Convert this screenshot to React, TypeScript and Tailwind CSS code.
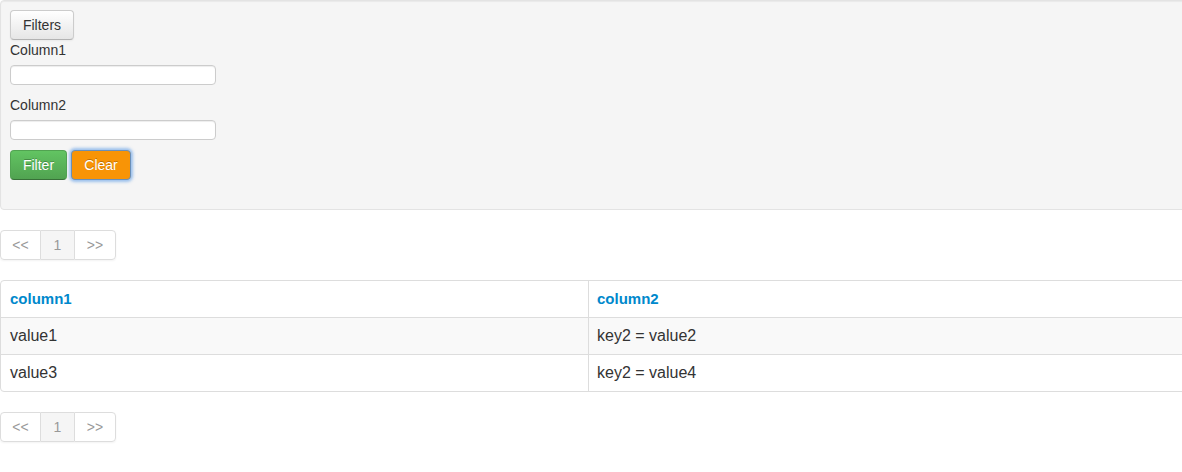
import React from "react";

const font = { fontFamily: '"Liberation Sans", Arial, sans-serif' };

function Pager() {
  return (
    <div className="flex">
      <div className="flex rounded-[4px] shadow-[0_1px_2px_rgba(0,0,0,0.05)] text-[14px] leading-[20px] text-[#999]">
        <span className="w-[41px] h-[30px] flex items-center justify-center border border-[#ddd] rounded-l-[4px] bg-white">&lt;&lt;</span>
        <span className="w-[33px] h-[30px] flex items-center justify-center border-y border-[#ddd] bg-[#f5f5f5]">1</span>
        <span className="w-[42px] h-[30px] flex items-center justify-center border border-[#ddd] rounded-r-[4px] bg-white">&gt;&gt;</span>
      </div>
    </div>
  );
}

export default function App() {
  return (
    <div className="w-[1182px] overflow-hidden bg-white text-[#333] text-[14px] leading-[20px]" style={font}>
      <div className="w-[1190px]">
        <div className="h-[210px] bg-[#f5f5f5] border border-[#e3e3e3] rounded-[4px] shadow-[inset_0_1px_1px_rgba(0,0,0,0.05)] pt-[9px] pl-[9px]">
          <button className="h-[30px] w-[64px] rounded-[4px] border border-[#ccc] border-b-[#b3b3b3] bg-gradient-to-b from-white to-[#e6e6e6] text-[14px] text-[#333] shadow-[inset_0_1px_0_rgba(255,255,255,0.2),0_1px_2px_rgba(0,0,0,0.05)]">
            Filters
          </button>
          <div>
            <label className="block h-[20px] mb-[5px]">Column1</label>
            <div className="w-[206px] h-[20px] bg-white border border-[#ccc] rounded-[4px] shadow-[inset_0_1px_1px_rgba(0,0,0,0.075)]" />
            <label className="block h-[20px] mt-[10px] mb-[5px]">Column2</label>
            <div className="w-[206px] h-[20px] bg-white border border-[#ccc] rounded-[4px] shadow-[inset_0_1px_1px_rgba(0,0,0,0.075)]" />
            <div className="flex gap-[4px] mt-[10px]">
              <button className="h-[30px] w-[57px] rounded-[4px] border border-[#51a351] border-b-[#387038] bg-gradient-to-b from-[#62c462] to-[#51a351] text-white text-[14px] [text-shadow:0_-1px_0_rgba(0,0,0,0.25)]">
                Filter
              </button>
              <button className="h-[30px] w-[60px] rounded-[4px] border border-[#6a8fb8] bg-[#f89406] text-white text-[14px] [text-shadow:0_-1px_0_rgba(0,0,0,0.25)] shadow-[0_0_3px_2px_rgba(82,150,230,0.55)]">
                Clear
              </button>
            </div>
          </div>
        </div>

        <div className="mt-[20px]">
          <Pager />
        </div>

        <div className="mt-[20px] border border-[#ddd] rounded-[4px] overflow-hidden text-[16px]">
          <div className="flex h-[36px] items-center font-bold text-[15px] text-[#0088cc]">
            <div className="w-[588px] pl-[9px] border-r border-[#ddd] h-full flex items-center">column1</div>
            <div className="flex-1 pl-[8px] h-full flex items-center">column2</div>
          </div>
          <div className="flex h-[37px] border-t border-[#ddd] bg-[#f9f9f9]">
            <div className="w-[588px] pl-[9px] border-r border-[#ddd] flex items-center">value1</div>
            <div className="flex-1 pl-[8px] flex items-center">key2 = value2</div>
          </div>
          <div className="flex h-[37px] border-t border-[#ddd]">
            <div className="w-[588px] pl-[9px] border-r border-[#ddd] flex items-center">value3</div>
            <div className="flex-1 pl-[8px] flex items-center">key2 = value4</div>
          </div>
        </div>

        <div className="mt-[20px] pb-[30px]">
          <Pager />
        </div>
      </div>
    </div>
  );
}
